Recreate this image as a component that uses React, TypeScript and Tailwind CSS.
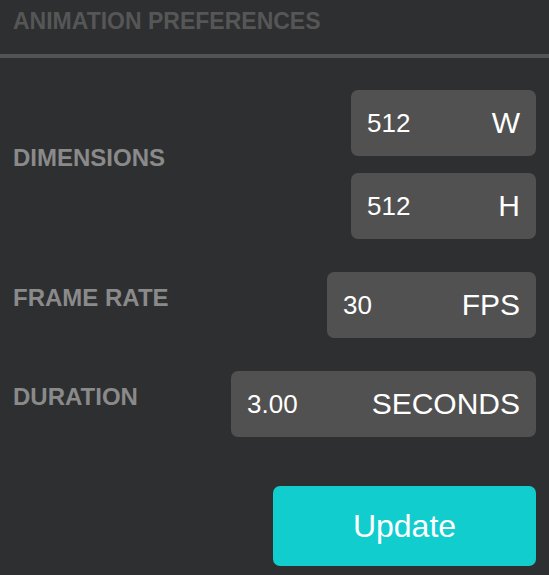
import React from 'react';

const font = { fontFamily: '"Liberation Sans", Arial, sans-serif' };

function Field({ value, unit, width }: { value: string; unit: string; width: string }) {
  return (
    <div className={`${width} h-[66px] rounded-[7px] bg-[#515151] flex items-center justify-between px-4 text-white`}>
      <span className="text-[26px] leading-none">{value}</span>
      <span className="text-[30px] leading-none">{unit}</span>
    </div>
  );
}

function Label({ children }: { children: React.ReactNode }) {
  return (
    <span className="text-[24px] font-bold text-[#8a8a8a] leading-none mb-[14px]">
      {children}
    </span>
  );
}

export default function App() {
  return (
    <div className="w-[549px] h-[575px] bg-[#2e2f31] overflow-hidden" style={font}>
      <div className="h-[54px] px-[13px] pt-[6px]">
        <h2 className="text-[23px] font-bold text-[#565656] leading-[30px]">
          ANIMATION PREFERENCES
        </h2>
      </div>
      <div className="h-[4px] bg-[#535353]" />

      <div className="px-[13px] pt-[32px] flex flex-col">
        <div className="flex items-center justify-between">
          <Label>DIMENSIONS</Label>
          <div className="flex flex-col gap-[17px]">
            <Field value="512" unit="W" width="w-[185px]" />
            <Field value="512" unit="H" width="w-[185px]" />
          </div>
        </div>

        <div className="flex items-center justify-between mt-[33px]">
          <Label>FRAME RATE</Label>
          <Field value="30" unit="FPS" width="w-[209px]" />
        </div>

        <div className="flex items-center justify-between mt-[33px]">
          <Label>DURATION</Label>
          <Field value="3.00" unit="SECONDS" width="w-[305px]" />
        </div>

        <div className="flex justify-end mt-[49px]">
          <button className="w-[263px] h-[80px] rounded-[7px] bg-[#12cdcd] text-white text-[32px]">
            Update
          </button>
        </div>
      </div>
    </div>
  );
}
